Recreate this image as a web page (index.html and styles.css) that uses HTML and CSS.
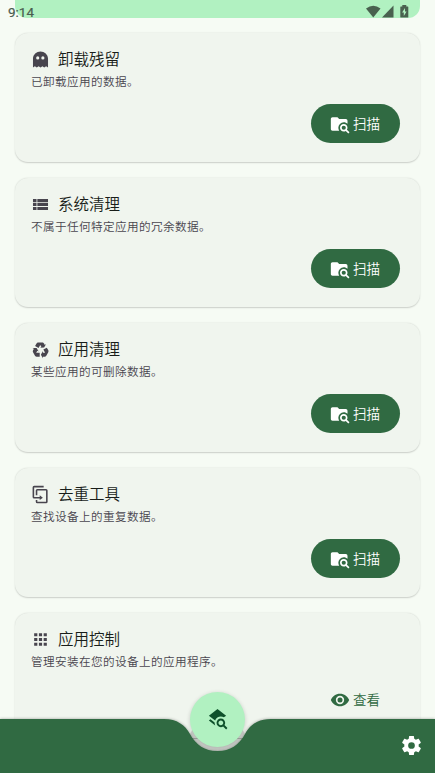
FILE: index.html
```html
<!DOCTYPE html>
<html lang="zh-CN">
<head>
<meta charset="utf-8">
<meta name="viewport" content="width=device-width">
<title>应用</title>
<link rel="stylesheet" href="styles.css">
</head>
<body>
<svg class="defs" aria-hidden="true">
  <symbol id="scan" viewBox="0 0 24 24"><path d="M16.5 12C19 12 21 14 21 16.5C21 17.38 20.75 18.21 20.31 18.9L23.39 22L22 23.39L18.88 20.32C18.19 20.75 17.37 21 16.5 21C14 21 12 19 12 16.5C12 14 14 12 16.5 12M16.5 14A2.5 2.5 0 0 0 14 16.5A2.5 2.5 0 0 0 16.5 19A2.5 2.5 0 0 0 19 16.5A2.5 2.5 0 0 0 16.5 14M9 4L11 6H19A2 2 0 0 1 21 8V11.81C19.83 10.69 18.25 10 16.5 10A6.5 6.5 0 0 0 10 16.5C10 17.79 10.37 19 11 20H3C1.89 20 1 19.1 1 18V6C1 4.89 1.89 4 3 4H9Z"/></symbol>
</svg>
<div class="screen">
  <div class="status">
    <span class="clock">9:14</span>
    <svg class="signals" viewBox="0 0 46 14"><path d="M0 3.500Q7.250-1.800 14.500 3.500L7.250 12.500Z"/><path d="M27.500 .5V12.500H16Z"/><path fill-rule="evenodd" d="M36.300 0h4V1.500h1.500q.5 0 .5.5V12q0 .5-.5.5h-7q-.5 0-.5-.5V2q0-.5.5-.5H36.300ZM39 3L36.100 7.500H37.800V11L40.600 6.500H39Z"/></svg>
  </div>
  <div class="banner"></div>
  <main class="list">
    <section class="card">
      <h2><svg viewBox="0 0 24 24"><path d="M12 2C7 2 2.500 6 2.500 11V22L4.900 20.500L7.300 22L9.600 20.500L12 22L14.400 20.500L16.700 22L19.100 20.500L21.500 22V11C21.500 6 17 2 12 2M8.500 8A2 2 0 0 1 10.500 10A2 2 0 0 1 8.500 12A2 2 0 0 1 6.500 10A2 2 0 0 1 8.500 8M15 8A2 2 0 0 1 17 10A2 2 0 0 1 15 12A2 2 0 0 1 13 10A2 2 0 0 1 15 8Z"/></svg>卸载残留</h2>
      <p>已卸载应用的数据。</p>
      <button class="btn"><svg><use href="#scan"/></svg><span>扫描</span></button>
    </section>
    <section class="card">
      <h2><svg viewBox="0 0 24 24"><path d="M8 5V9H21.500V5M8 19H21.500V15H8M8 14H21.500V10H8M2.500 9H7V5H2.500M2.500 19H7V15H2.500M2.500 14H7V10H2.500V14Z"/></svg>系统清理</h2>
      <p>不属于任何特定应用的冗余数据。</p>
      <button class="btn"><svg><use href="#scan"/></svg><span>扫描</span></button>
    </section>
    <section class="card">
      <h2><svg viewBox="0 0 24 24"><path d="M21.820 15.420L19.320 19.750C18.830 20.610 17.920 21.060 17 21H15V23L12.500 18.500L15 14V16H17.820L15.600 12.150L19.930 9.650L21.730 12.770C22.250 13.540 22.320 14.570 21.820 15.420M9.210 3.060H14.210C15.190 3.060 16.040 3.630 16.450 4.450L17.450 6.190L19.180 5.190L16.540 9.600L11.390 9.690L13.120 8.690L11.710 6.240L9.500 10.090L5.160 7.590L6.960 4.470C7.370 3.640 8.220 3.060 9.210 3.060M5.050 19.760L2.550 15.430C2.060 14.580 2.130 13.560 2.640 12.790L3.640 11.060L1.910 10.060L7.050 10.140L9.700 14.560L7.970 13.560L6.560 16H11V21H7.400C6.470 21.070 5.550 20.610 5.050 19.760Z"/></svg>应用清理</h2>
      <p>某些应用的可删除数据。</p>
      <button class="btn"><svg><use href="#scan"/></svg><span>扫描</span></button>
    </section>
    <section class="card">
      <h2><svg viewBox="0 0 24 24"><path d="M11 17H4A2 2 0 0 1 2 15V3A2 2 0 0 1 4 1H16V3H4V15H11V13L15 16L11 19V17M19 21V7H8V13H6V7A2 2 0 0 1 8 5H19A2 2 0 0 1 21 7V21A2 2 0 0 1 19 23H8A2 2 0 0 1 6 21V19H8V21H19Z"/></svg>去重工具</h2>
      <p>查找设备上的重复数据。</p>
      <button class="btn"><svg><use href="#scan"/></svg><span>扫描</span></button>
    </section>
    <section class="card">
      <h2><svg viewBox="0 0 24 24"><path d="M16 20H20V16H16M16 14H20V10H16M10 8H14V4H10M16 8H20V4H16M10 14H14V10H10M4 14H8V10H4M4 20H8V16H4M10 20H14V16H10M4 8H8V4H4V8Z"/></svg>应用控制</h2>
      <p>管理安装在您的设备上的应用程序。</p>
      <button class="btn text"><svg viewBox="0 0 24 24"><path d="M12 9A3 3 0 0 0 9 12A3 3 0 0 0 12 15A3 3 0 0 0 15 12A3 3 0 0 0 12 9M12 17A5 5 0 0 1 7 12A5 5 0 0 1 12 7A5 5 0 0 1 17 12A5 5 0 0 1 12 17M12 4.500C7 4.500 2.730 7.610 1 12C2.730 16.390 7 19.500 12 19.500C17 19.500 21.270 16.390 23 12C21.270 7.610 17 4.500 12 4.500Z"/></svg><span>查看</span></button>
    </section>
  </main>
  <footer class="bar">
    <svg class="cradle" viewBox="0 0 435 60">
      <path class="pit" d="M190 21C196 32 205 38 217.500 38C230 38 239 32 245 21L240 12H195Z"/>
      <path class="rule" d="M191 25.500H244"/>
      <path class="fill" d="M0 6H164C177 6 185 12 190 21C196 32 205 38 217.500 38C230 38 239 32 245 21C250 12 258 6 271 6H435V60H0Z"/>
    </svg>
    <button class="fab"><svg viewBox="0 0 24 24"><path d="M19.310 18.900C19.750 18.210 20 17.380 20 16.500C20 14 18 12 15.500 12S11 14 11 16.500 13 21 15.500 21C16.370 21 17.190 20.750 17.880 20.320L21 23.390L22.390 22L19.310 18.900M15.500 19C14.120 19 13 17.880 13 16.500S14.120 14 15.500 14 18 15.120 18 16.500 16.880 19 15.500 19M9.590 19.200L3 14.070L4.620 12.810L9 16.220V16.500C9 17.460 9.220 18.380 9.590 19.200M9.500 14.040L3 9L12 2L21 9L18.660 10.820C17.710 10.300 16.640 10 15.500 10C12.830 10 10.530 11.610 9.500 14.040Z"/></svg></button>
    <svg class="gear" viewBox="0 0 24 24"><path d="M12 15.500A3.500 3.500 0 0 1 8.500 12A3.500 3.500 0 0 1 12 8.500A3.500 3.500 0 0 1 15.500 12A3.500 3.500 0 0 1 12 15.500M19.430 12.970C19.470 12.650 19.500 12.330 19.500 12C19.500 11.670 19.470 11.340 19.430 11L21.540 9.370C21.730 9.220 21.780 8.950 21.660 8.730L19.660 5.270C19.540 5.050 19.270 4.960 19.050 5.050L16.560 6.050C16.040 5.660 15.500 5.320 14.870 5.070L14.500 2.420C14.460 2.180 14.250 2 14 2H10C9.750 2 9.540 2.180 9.500 2.420L9.130 5.070C8.500 5.320 7.960 5.660 7.440 6.050L4.950 5.050C4.730 4.960 4.460 5.050 4.340 5.270L2.340 8.730C2.210 8.950 2.270 9.220 2.460 9.370L4.570 11C4.530 11.340 4.500 11.670 4.500 12C4.500 12.330 4.530 12.650 4.570 12.970L2.460 14.630C2.270 14.780 2.210 15.050 2.340 15.270L4.340 18.730C4.460 18.950 4.730 19.030 4.950 18.950L7.440 17.940C7.960 18.340 8.500 18.680 9.130 18.930L9.500 21.580C9.540 21.820 9.750 22 10 22H14C14.250 22 14.460 21.820 14.500 21.580L14.870 18.930C15.500 18.670 16.040 18.340 16.560 17.940L19.050 18.950C19.270 19.030 19.540 18.950 19.660 18.730L21.660 15.270C21.780 15.050 21.730 14.780 21.540 14.630L19.430 12.970Z"/></svg>
  </footer>
</div>
</body>
</html>
```
FILE: styles.css
```css
* { box-sizing: border-box; }
body { margin: 0; }
.defs { position: absolute; width: 0; height: 0; }
.screen {
  position: relative;
  width: 435px;
  height: 773px;
  overflow: hidden;
  background: #f6fbf4;
  font-family: Roboto, "Noto Sans CJK SC", sans-serif;
}
.status {
  position: absolute;
  z-index: 2;
  top: 0;
  left: 0;
  right: 0;
  height: 24px;
  padding: 4px 25px 0 8px;
  display: flex;
  justify-content: space-between;
  align-items: flex-start;
}
.clock { font-size: 13.500px; line-height: 16px; font-weight: 400; color: #4a5c50; -webkit-text-stroke: .2px #4a5c50; }
.signals { width: 46px; height: 14px; margin-right: -1.500px; margin-top: 1px; fill: #49614f; }
.banner {
  height: 17.500px;
  margin: 0 15px;
  border-radius: 0 0 12px 12px;
  background: #b1f1c1;
}
.list {
  display: flex;
  flex-direction: column;
  gap: 16px;
  padding: 15.500px 15px 0;
}
.card {
  flex: none;
  height: 129px;
  padding: 16px 20px 0 16px;
  display: flex;
  flex-direction: column;
  border-radius: 13px;
  background: #f0f5ee;
  box-shadow: 0 .5px 1.500px rgba(0, 0, 0, .18);
}
h2 {
  margin: 0;
  height: 22px;
  display: flex;
  align-items: center;
  gap: 8px;
  font-size: 15.500px;
  line-height: 22px;
  font-weight: 350;
  color: #181d19;
}
h2 svg { width: 19px; height: 19px; margin-top: -2px; fill: #48454e; }
p {
  margin: 3px 0 0;
  font-size: 11.600px;
  line-height: 17px;
  font-weight: 350;
  letter-spacing: .4px;
  color: #49454f;
}
.btn {
  align-self: flex-end;
  margin-top: 13px;
  width: 89px;
  height: 39px;
  padding: 0 1px 0 0;
  display: flex;
  align-items: center;
  justify-content: center;
  gap: 3px;
  border: 0;
  border-radius: 20px;
  background: #306a42;
  color: #fff;
  font: 350 13.500px Roboto, "Noto Sans CJK SC", sans-serif;
}
.btn svg { width: 20px; height: 20px; fill: currentColor; }
.btn span { margin-bottom: 2px; }
.btn.text { margin-top: 9px; background: none; color: #306a42; }
.bar {
  position: absolute;
  left: 0;
  right: 0;
  bottom: 0;
  height: 60px;
  display: flex;
  justify-content: flex-end;
  align-items: center;
  padding: 5px 12px 0 0;
}
.cradle { position: absolute; inset: 0; width: 435px; height: 60px; overflow: visible; }
.fill { fill: #306a42; filter: drop-shadow(0 0 1.500px rgba(0, 0, 0, .35)); }
.pit { fill: #d0d4cf; }
.rule { stroke: #a3a8a2; stroke-width: 1; }
.fab {
  position: absolute;
  left: 190px;
  top: -21.500px;
  width: 55px;
  height: 55px;
  padding: 0;
  display: flex;
  align-items: center;
  justify-content: center;
  border: 0;
  border-radius: 50%;
  background: #b1f1c1;
  box-shadow: 0 1px 4px rgba(0, 0, 0, .18);
}
.fab svg { width: 23px; height: 23px; margin-top: -1px; fill: #0e512b; }
.gear { position: relative; width: 23px; height: 23px; fill: #fff; }
```
